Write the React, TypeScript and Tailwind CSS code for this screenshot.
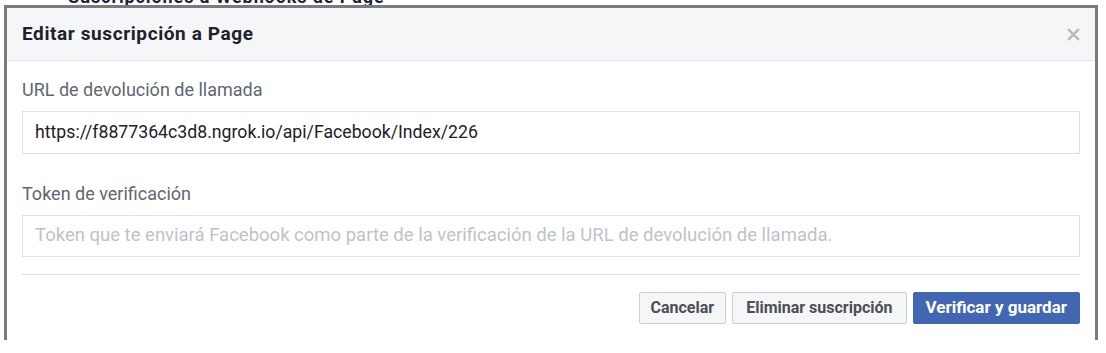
const font = { fontFamily: 'Roboto, "Liberation Sans", Arial, sans-serif' }

const App = () => {
    return (
        <div className="w-[1106px] h-[353px] bg-white overflow-hidden relative" style={font}>
            <div className="absolute left-[68px] top-[-17px] text-[18px] font-bold text-[#1c2340] tracking-[0.9px] whitespace-nowrap">
                Suscripciones a Webhooks de Page
            </div>
            <div className="absolute left-[4px] top-[5px] w-[1094px] h-[335px] border-x-[3px] border-t-[3px] border-[#7b7b7b] bg-white flex flex-col">
                <div className="h-[53px] shrink-0 bg-[#f5f6f7] border-b border-[#e5e5e5] flex items-center justify-between pl-[15px] pr-[15px]">
                    <span className="text-[19px] tracking-[0.6px] font-bold text-[#1d2129]">Editar suscripción a Page</span>
                    <svg width="13" height="13" viewBox="0 0 12 12" className="text-[#b7b9bd]">
                        <path d="M1 1L11 11M11 1L1 11" stroke="currentColor" strokeWidth="2.2" />
                    </svg>
                </div>
                <div className="px-[15px]">
                    <div className="mt-[19px] text-[18px] leading-[20px] text-[#606770]">URL de devolución de llamada</div>
                    <div className="mt-[11px] h-[43px] border border-[#dddfe2] flex items-center px-[12px] text-[17.7px] text-[#1d2129]">
                        https://f8877364c3d8.ngrok.io/api/Facebook/Index/226
                    </div>
                    <div className="mt-[30px] text-[18px] leading-[20px] text-[#606770]">Token de verificación</div>
                    <div className="mt-[11px] h-[42px] border border-[#dddfe2] flex items-center px-[12px] text-[18.5px] text-[#bec3c9]">
                        Token que te enviará Facebook como parte de la verificación de la URL de devolución de llamada.
                    </div>
                    <div className="mt-[17px] border-t border-[#dddfe2]" />
                    <div className="mt-[17px] flex justify-end gap-[6px]">
                        <button className="h-[32px] px-[11px] rounded-[2px] border border-[#ccd0d5] bg-[#f5f6f7] text-[16px] font-bold text-[#4b4f56]">
                            Cancelar
                        </button>
                        <button className="h-[32px] px-[13px] rounded-[2px] border border-[#ccd0d5] bg-[#f5f6f7] text-[16px] font-bold text-[#4b4f56]">
                            Eliminar suscripción
                        </button>
                        <button className="h-[32px] px-[12px] rounded-[2px] border border-[#4267b2] bg-[#4267b2] text-[17px] font-bold text-white">
                            Verificar y guardar
                        </button>
                    </div>
                </div>
            </div>
        </div>
    )
}

export default App
